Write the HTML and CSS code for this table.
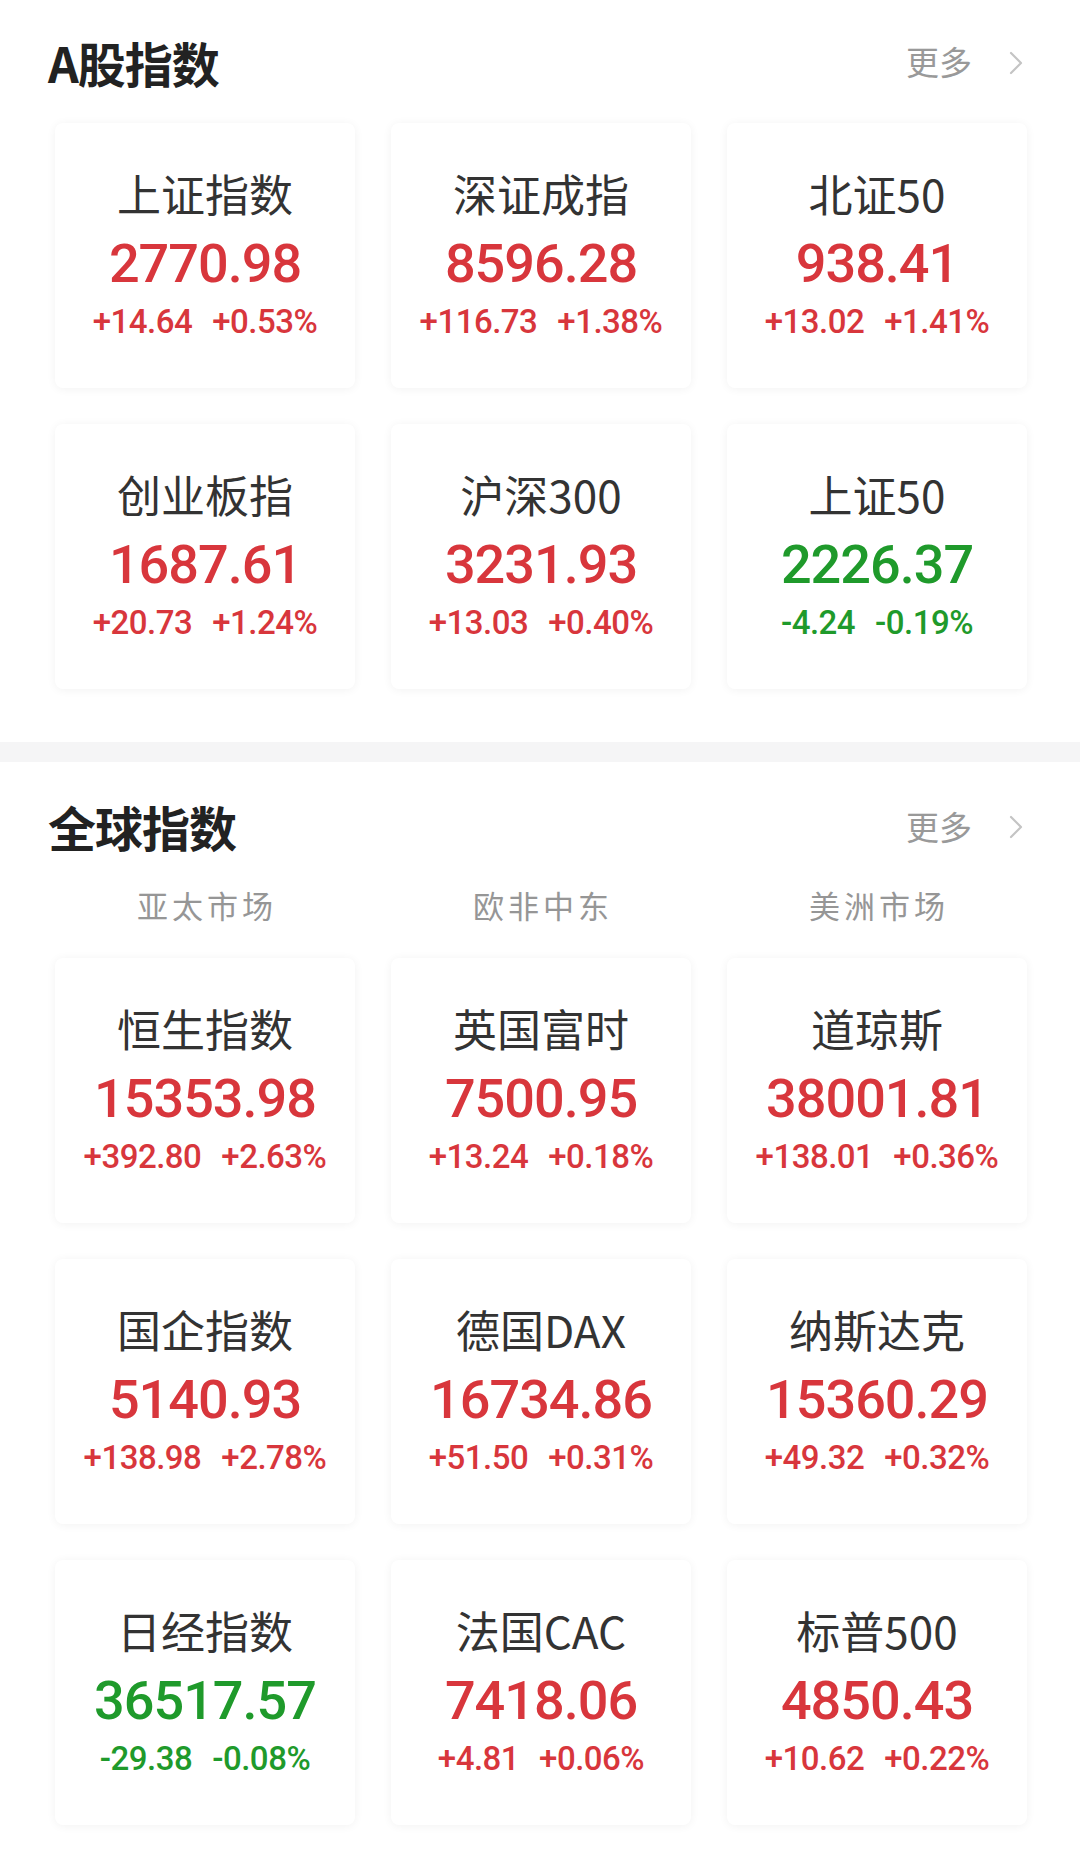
FILE: index.html
```html
<!DOCTYPE html>
<html lang="zh-CN">
<head>
<meta charset="utf-8">
<title>指数</title>
<link rel="stylesheet" href="styles.css">
</head>
<body>
<section class="section section-a">
  <header class="head">
    <h2 class="title">A股指数</h2>
    <a class="more">更多<svg class="chev" viewBox="0 0 16 24" width="16" height="24"><path d="M3 2 L13 12 L3 22" fill="none" stroke="#c4c4c4" stroke-width="2.2" stroke-linecap="round" stroke-linejoin="round"/></svg></a>
  </header>
  <div class="grid">
    <div class="card"><div class="name">上证指数</div><div class="val up">2770.98</div><div class="chg up"><span>+14.64</span><span>+0.53%</span></div></div>
    <div class="card"><div class="name">深证成指</div><div class="val up">8596.28</div><div class="chg up"><span>+116.73</span><span>+1.38%</span></div></div>
    <div class="card"><div class="name">北证50</div><div class="val up">938.41</div><div class="chg up"><span>+13.02</span><span>+1.41%</span></div></div>
    <div class="card"><div class="name">创业板指</div><div class="val up">1687.61</div><div class="chg up"><span>+20.73</span><span>+1.24%</span></div></div>
    <div class="card"><div class="name">沪深300</div><div class="val up">3231.93</div><div class="chg up"><span>+13.03</span><span>+0.40%</span></div></div>
    <div class="card"><div class="name">上证50</div><div class="val down">2226.37</div><div class="chg down"><span>-4.24</span><span>-0.19%</span></div></div>
  </div>
</section>
<div class="sep"></div>
<section class="section section-b">
  <header class="head head-b">
    <h2 class="title">全球指数</h2>
    <a class="more">更多<svg class="chev" viewBox="0 0 16 24" width="16" height="24"><path d="M3 2 L13 12 L3 22" fill="none" stroke="#c4c4c4" stroke-width="2.2" stroke-linecap="round" stroke-linejoin="round"/></svg></a>
  </header>
  <div class="tabs">
    <div class="tab">亚太市场</div>
    <div class="tab">欧非中东</div>
    <div class="tab">美洲市场</div>
  </div>
  <div class="grid">
    <div class="card"><div class="name">恒生指数</div><div class="val up">15353.98</div><div class="chg up"><span>+392.80</span><span>+2.63%</span></div></div>
    <div class="card"><div class="name">英国富时</div><div class="val up">7500.95</div><div class="chg up"><span>+13.24</span><span>+0.18%</span></div></div>
    <div class="card"><div class="name">道琼斯</div><div class="val up">38001.81</div><div class="chg up"><span>+138.01</span><span>+0.36%</span></div></div>
    <div class="card"><div class="name">国企指数</div><div class="val up">5140.93</div><div class="chg up"><span>+138.98</span><span>+2.78%</span></div></div>
    <div class="card"><div class="name">德国DAX</div><div class="val up">16734.86</div><div class="chg up"><span>+51.50</span><span>+0.31%</span></div></div>
    <div class="card"><div class="name">纳斯达克</div><div class="val up">15360.29</div><div class="chg up"><span>+49.32</span><span>+0.32%</span></div></div>
    <div class="card"><div class="name">日经指数</div><div class="val down">36517.57</div><div class="chg down"><span>-29.38</span><span>-0.08%</span></div></div>
    <div class="card"><div class="name">法国CAC</div><div class="val up">7418.06</div><div class="chg up"><span>+4.81</span><span>+0.06%</span></div></div>
    <div class="card"><div class="name">标普500</div><div class="val up">4850.43</div><div class="chg up"><span>+10.62</span><span>+0.22%</span></div></div>
  </div>
</section>
</body>
</html>
```
FILE: styles.css
```css
* { box-sizing: border-box; }
html, body {
  margin: 0;
  padding: 0;
  background: #ffffff;
  width: 1080px;
  height: 1872px;
  overflow: hidden;
  font-family: "Noto Sans CJK SC", "Noto Sans", sans-serif;
}
.section {
  padding: 0 54px 0 55px;
}
.section-a {
  padding-bottom: 53px;
}
.head {
  height: 123px;
  display: flex;
  align-items: center;
  justify-content: space-between;
}
.head-b {
  height: 128px;
}
.title {
  margin: 0 0 0 -7px;
  font-size: 48px;
  font-weight: 700;
  color: #222222;
  line-height: 1;
  letter-spacing: -1px;
}
.more {
  display: flex;
  align-items: center;
  font-size: 33px;
  color: #999999;
  line-height: 1;
  margin-right: 2px;
}
.chev {
  margin-left: 36px;
  margin-top: 2px;
}
.sep {
  height: 20px;
  background: #f5f5f6;
}
.tabs {
  display: grid;
  grid-template-columns: repeat(3, 300px);
  column-gap: 36px;
  height: 30px;
  margin-bottom: 38px;
}
.tab {
  text-align: center;
  font-size: 31px;
  line-height: 30px;
  letter-spacing: 4px;
  padding-left: 4px;
  color: #969696;
}
.grid {
  display: grid;
  grid-template-columns: repeat(3, 300px);
  grid-auto-rows: 265px;
  gap: 36px;
}
.card {
  background: #fff;
  border-radius: 8px;
  box-shadow: 0 1px 10px rgba(0, 0, 0, 0.055);
  padding-top: 45px;
  text-align: center;
}
.name {
  font-size: 44px;
  line-height: 50px;
  color: #333333;
  font-weight: 400;
}
.val {
  margin-top: 14px;
  font-family: Roboto, "Liberation Sans", sans-serif;
  font-size: 54px;
  line-height: 64px;
  font-weight: 500;
  letter-spacing: -1px;
}
.chg {
  margin-top: 6px;
  font-family: Roboto, "Liberation Sans", sans-serif;
  font-size: 33px;
  line-height: 40px;
  font-weight: 500;
  letter-spacing: -0.5px;
  display: flex;
  justify-content: center;
  gap: 20px;
}
.up { color: #d8363c; }
.down { color: #1f9a2b; }
```
